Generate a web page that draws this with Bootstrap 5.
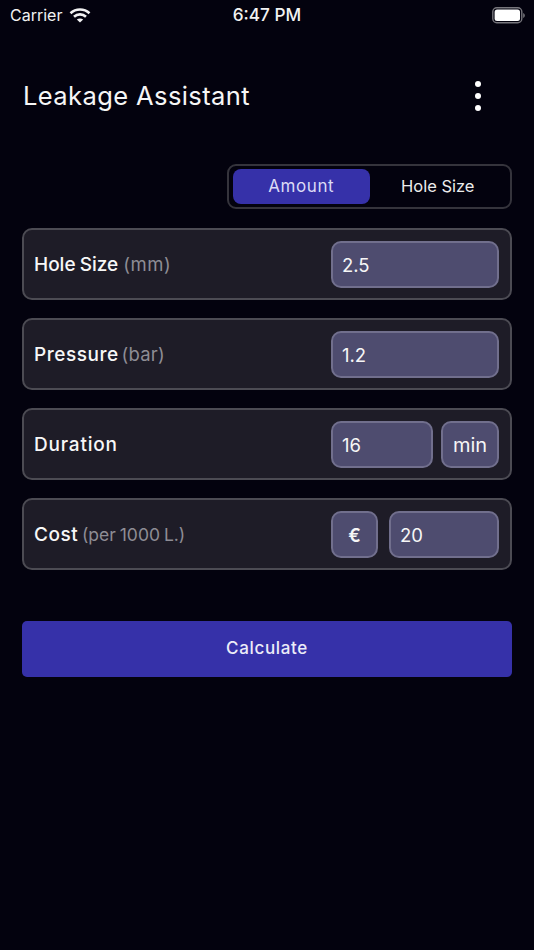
<!doctype html>
<html lang="en"><head><meta charset="utf-8"><title>Leakage Assistant</title>
<link href="https://cdn.jsdelivr.net/npm/bootstrap@5.3.0/dist/css/bootstrap.min.css" rel="stylesheet">
<style>
html,body{height:100%}
body{background:#03020e;color:#fff;font-family:Inter,"Liberation Sans",sans-serif;width:534px;height:950px;overflow:hidden}
.status-row{height:30px;padding:0 9px 0 10px;position:relative;font-size:16px;color:#f2f2f2}
.status-time{position:absolute;left:0;right:0;top:3px;text-align:center;font-weight:500;font-size:17.2px;line-height:24px}
.carrier{font-size:16px;line-height:30px}
.wifi-gap{gap:7px}
.app-head{padding:0 53px 0 23px;margin-top:32px;height:68px}
.app-title{font-size:25.5px;font-weight:400;margin:0;letter-spacing:.4px;color:#f6f6f6}
.kebab{gap:6px;width:6px}
.kebab i{display:block;width:6px;height:6px;border-radius:50%;background:#fff}
.seg-wrap{padding:0 22px;margin-top:34px}
.seg{width:285px;height:45px;border:2px solid #35343c;border-radius:9px;padding:3px 4px}
.seg-item{flex:1 1 0;border-radius:8px;font-size:16.5px;color:#ececec;line-height:35px;text-align:center}
.seg-on{background:#3631a9;color:#dcdbf5;font-size:17px;letter-spacing:.6px}
.fields{padding:0 22px;margin-top:19px;gap:18px}
.field{height:72px;background:#1e1c27;border:2px solid #4c4b53;border-radius:10px;padding:0 11px 0 10px}
.flabel{font-size:19px;font-weight:500;color:#f7f7f7;letter-spacing:.55px;word-spacing:-1px;padding-top:3px}
.flabel-hs{letter-spacing:0}
.flabel-dur{letter-spacing:.8px}
.funit{font-size:18.5px;font-weight:400;color:#8e8d95;margin-left:1px;letter-spacing:.5px}
.funit-bar{margin-left:-2px;letter-spacing:.25px}
.funit-c{font-size:17.5px;letter-spacing:0;margin-left:-1px}
.box{height:47px;background:#4e4c6f;border:2px solid #716f8d;border-radius:10px;font-size:18.5px;line-height:45px;color:#f6f6f6;padding:0 9px}
.w168{width:168px}.w102{width:102px}.w58{width:58px;text-align:center;padding:0;font-size:20px}.w46{width:47px;text-align:center;padding:0;font-weight:600}.w110{width:110px}
.w-gap{gap:8px}.c-gap{gap:11px}
.calc-wrap{padding:0 22px;margin-top:51px}
.btn-calc{height:56px;width:100%;background:#3631a9;border:0;border-radius:5px;color:#ececf8;font-size:17px;font-weight:500;letter-spacing:.65px}
.btn-calc:hover{background:#3631a9;color:#ececf8}
</style></head><body>
<div class="status-row d-flex align-items-center justify-content-between">
  <div class="d-flex align-items-center wifi-gap"><span class="carrier">Carrier</span>
    <svg width="22" height="16" viewBox="0 0 22 16" fill="none" stroke="#f2f2f2" stroke-width="2.6"><path d="M1.500 6.200C6.800 1.200 15.200 1.200 20.500 6.200"/><path d="M5 9.800C8.400 6.600 13.600 6.600 17 9.800"/><path d="M11 15.400 7.800 12.600C9.600 11 12.400 11 14.200 12.600Z" fill="#f2f2f2" stroke="none"/></svg></div>
  <div class="status-time">6:47 PM</div>
  <svg width="33" height="17" viewBox="0 0 33 17"><rect x=".8" y=".8" width="29" height="15" rx="4" fill="none" stroke="#77767c" stroke-width="1.4"/><rect x="2.600" y="2.600" width="25.400" height="11.400" rx="2.500" fill="#fff"/><path d="M31.200 6v5c1-.4 1.600-1.400 1.600-2.500S32.200 6.400 31.200 6Z" fill="#77767c"/></svg>
</div>
<header class="app-head d-flex align-items-center justify-content-between">
  <h1 class="app-title">Leakage Assistant</h1>
  <div class="kebab d-flex flex-column"><i></i><i></i><i></i></div>
</header>
<div class="seg-wrap d-flex justify-content-end">
  <div class="seg d-flex"><div class="seg-item seg-on">Amount</div><div class="seg-item">Hole Size</div></div>
</div>
<main class="fields d-flex flex-column">
  <div class="field d-flex align-items-center justify-content-between"><div class="flabel flabel-hs">Hole Size <span class="funit">(mm)</span></div><div class="box w168">2.5</div></div>
  <div class="field d-flex align-items-center justify-content-between"><div class="flabel">Pressure <span class="funit funit-bar">(bar)</span></div><div class="box w168">1.2</div></div>
  <div class="field d-flex align-items-center justify-content-between"><div class="flabel flabel-dur">Duration</div><div class="d-flex w-gap"><div class="box w102">16</div><div class="box w58">min</div></div></div>
  <div class="field d-flex align-items-center justify-content-between"><div class="flabel">Cost <span class="funit funit-c">(per 1000 L.)</span></div><div class="d-flex c-gap"><div class="box w46">€</div><div class="box w110">20</div></div></div>
</main>
<div class="calc-wrap"><button class="btn btn-calc" type="button">Calculate</button></div>
<script src="https://cdn.jsdelivr.net/npm/bootstrap@5.3.0/dist/js/bootstrap.bundle.min.js"></script>
</body></html>
